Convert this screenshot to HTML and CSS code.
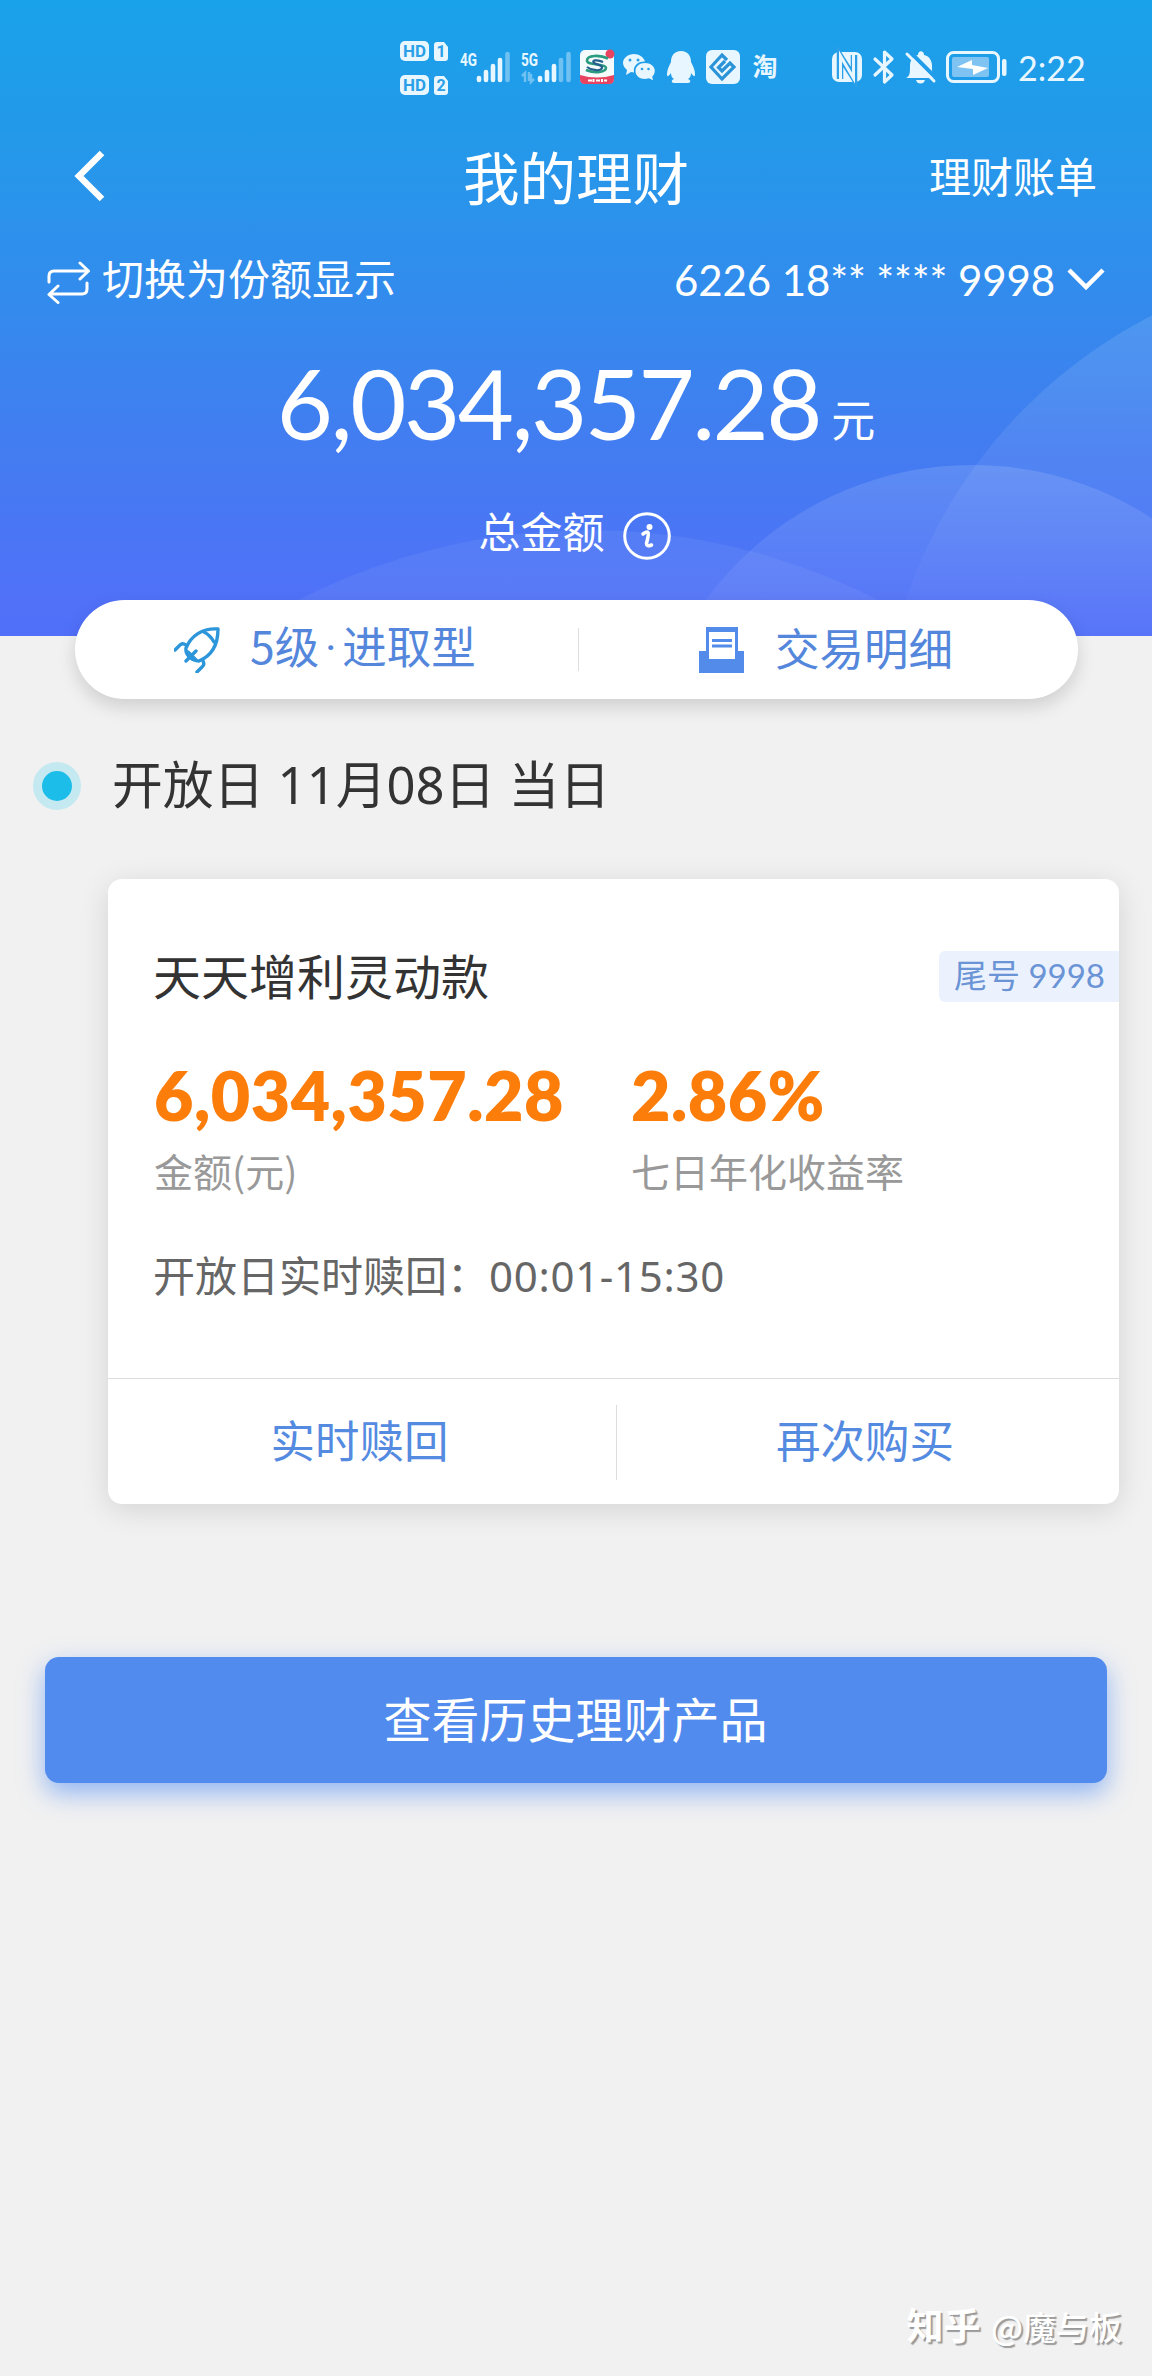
FILE: index.html
```html
<!DOCTYPE html>
<html lang="zh-CN">
<head>
    <meta charset="UTF-8">
    <meta name="viewport" content="width=device-width, initial-scale=1.0">
    <title>我的理财</title>
    <link rel="stylesheet" href="styles.css">
</head>
<body>
    <header class="header">
        <svg class="header-bg" viewBox="0 0 1152 636" width="1152" height="636">
            <defs>
                <linearGradient id="fade" gradientUnits="userSpaceOnUse" x1="0" y1="316" x2="0" y2="636">
                    <stop offset="0" stop-color="#fff" stop-opacity="0.12"/>
                    <stop offset="1" stop-color="#fff" stop-opacity="0.01"/>
                </linearGradient>
                <linearGradient id="fade2" gradientUnits="userSpaceOnUse" x1="0" y1="465" x2="0" y2="636">
                    <stop offset="0" stop-color="#fff" stop-opacity="0.13"/>
                    <stop offset="1" stop-color="#fff" stop-opacity="0.03"/>
                </linearGradient>
            </defs>
            <circle cx="1379" cy="761" r="500" fill="url(#fade)"/>
            <circle cx="972" cy="795" r="330" fill="url(#fade2)"/>
            <circle cx="588" cy="1166" r="636" fill="#fff" fill-opacity="0.06"/>
        </svg>

        <div class="status-bar">
            <svg class="status-icons" viewBox="400 36 620 64" width="620" height="64">
                <g fill="#e8f7ff">
                    <rect x="400" y="41" width="29" height="20" rx="5"/>
                    <rect x="400" y="75" width="29" height="20" rx="5"/>
                    <path d="M437 42h7l4 5v11q0 3-3 3h-8q-3 0-3-3V45q0-3 3-3z"/>
                    <path d="M437 76h7l4 5v11q0 3-3 3h-8q-3 0-3-3V79q0-3 3-3z"/>
                </g>
                <g class="sim-text" fill="#2b9fe8" font-size="16">
                    <text x="403" y="57" textLength="23" lengthAdjust="spacingAndGlyphs">HD</text>
                    <text x="403" y="91" textLength="23" lengthAdjust="spacingAndGlyphs">HD</text>
                    <text x="436.500" y="57">1</text>
                    <text x="436.500" y="91">2</text>
                </g>
                <g class="sim-text" fill="#e8f7ff" font-size="19">
                    <text x="460" y="65.500" textLength="17" lengthAdjust="spacingAndGlyphs">4G</text>
                    <text x="521" y="65.500" textLength="17" lengthAdjust="spacingAndGlyphs">5G</text>
                </g>
                <g stroke="#e8f7ff" stroke-width="4.600" stroke-linecap="round">
                    <path d="M479 78v2M486 72v8M493 66v14M500 60v20"/>
                    <path d="M507.500 54v26" opacity=".4"/>
                    <path d="M540 78v2M547 72v8M554 66v14"/>
                    <path d="M561 60v20M568.500 54v26" opacity=".4"/>
                </g>
                <path d="M522 76l3-3v9M529 72v9M531 74v8l3-3" fill="none" stroke="#e8f7ff" stroke-width="2.500" opacity=".4"/>

                <!-- bank app -->
                <rect x="580" y="50" width="34" height="34" rx="5" fill="#f4fbfa"/>
                <path d="M580 75q17 5 34 0v4q0 5-5 5h-24q-5 0-5-5z" fill="#e8435f"/>
                <circle cx="610" cy="54" r="4.500" fill="#e8435f"/>
                <path d="M588 80.500h4M593.500 79v3M596 80.500h4M602 79v3M604 80.500h3" stroke="#fff" stroke-width="2"/>
                <path d="M608 58.500c-8-4-21-3.500-21 2s18 2.500 19 7c0 5-11 6-20 2.500" fill="none" stroke="#2a9b7e" stroke-width="2.600"/>
                <path d="M603 62c-6-3-12-1.500-9 .8s9 2 8 5.200-10 3-15-1" fill="none" stroke="#23608c" stroke-width="2.200"/>

                <!-- chat bubbles -->
                <g fill="#e8f7ff">
                    <path d="M634 54c-6 0-11 4-11 9 0 3 2 5 4 7l-1 5 5-3 3 .5a10 9 0 0 1 11-11c-1-4-6-7.500-11-7.500z"/>
                    <path d="M645 63c-5.500 0-9.500 3.500-9.500 8s4 8 9.500 8l4-.8 4 2-.8-3.600c1.500-1.500 2.600-3.500 2.600-5.600 0-4.500-4.300-8-9.800-8z"/>
                </g>
                <g fill="#2b9fe8">
                    <circle cx="630" cy="60" r="1.500"/><circle cx="638" cy="60" r="1.500"/>
                    <circle cx="642" cy="69" r="1.300"/><circle cx="648.500" cy="69" r="1.300"/>
                </g>

                <!-- penguin -->
                <path d="M681 51c-7 0-10 5-10 11-2 4-4 8-4 12 0 3 1 3 4-1 0 3 1 5 3 6-3 1-3 4 0 4h14c3 0 3-3 0-4 2-1 3-3 3-6 3 4 4 4 4 1 0-4-2-8-4-12 0-6-3-11-10-11z" fill="#e8f7ff"/>

                <rect x="706" y="50" width="34" height="34" rx="6" fill="#e8f7ff"/>
                <path d="M727 60l-5-5-11 12 11 12 12-12-4-4-8 8-3.500-3.500 6.500-6.500" fill="none" stroke="#2b93d8" stroke-width="3.200"/>
                <text class="tao" x="752.500" y="76" font-size="25" fill="#e8f7ff">淘</text>

                <!-- nfc -->
                <rect x="832" y="52" width="30" height="30" rx="7" fill="#e8f7ff"/>
                <path d="M840 79V56l14 22V55" fill="none" stroke="#2b9fe8" stroke-width="6.500"/>
                <path d="M840.500 82V56l13 22V52" fill="none" stroke="#e8f7ff" stroke-width="3"/>

                <path d="M875 59l17 16-7.500 7V52l7.500 7-17 16" fill="none" stroke="#e8f7ff" stroke-width="3.200" stroke-linejoin="round" stroke-linecap="round"/>

                <!-- muted bell -->
                <path d="M906 78c4-2 4-5 4-12 0-6 3-10 8-11 0-5 6-5 6 0 5 1 8 5 8 11 0 7 0 10 4 12zM916 80h9q-1 3.500-4.500 3.500T916 80z" fill="#e8f7ff"/>
                <path d="M909 51l29 29" stroke="#229de9" stroke-width="4"/>
                <path d="M907 54l27 27" stroke="#e8f7ff" stroke-width="3" stroke-linecap="round"/>

                <rect x="947.500" y="52.500" width="51" height="29" rx="6" fill="none" stroke="#e8f7ff" stroke-width="3"/>
                <rect x="952" y="57" width="37" height="20" rx="2" fill="#7fc3f3"/>
                <rect x="1002" y="59" width="4.500" height="17" rx="2" fill="#e8f7ff"/>
                <path d="M957 67l15-7v5l16 3-15 7v-6z" fill="#fff"/>
            </svg>
            <span class="clock">2:22</span>
        </div>

        <nav class="nav">
            <svg class="nav-back" viewBox="0 0 32 52" width="32" height="52"><path d="M28 3L5 26l23 23" fill="none" stroke="#fff" stroke-width="6.500"/></svg>
            <h1>我的理财</h1>
            <a class="nav-bill">理财账单</a>
        </nav>

        <div class="account">
            <div class="account-switch">
                <svg viewBox="0 0 44 44" width="44" height="44" fill="none" stroke="#fff" stroke-width="3" stroke-linecap="round" stroke-linejoin="round">
                    <path d="M2 22v-6q0-5 5-5h34M33 3l8.500 8L33 19M40 23v6q0 5-5 5H3M11 26l-9 8.500 9 8"/>
                </svg>
                <span>切换为份额显示</span>
            </div>
            <div class="account-card">
                <span>6226 18** **** 9998</span>
                <svg viewBox="0 0 40 26" width="40" height="26"><path d="M3 3l17 17L37 3" fill="none" stroke="#fff" stroke-width="4.500"/></svg>
            </div>
        </div>

        <div class="total"><span class="total-num">6,034,357.28</span><span class="total-unit">元</span></div>
        <div class="total-label">
            <span>总金额</span>
            <svg viewBox="0 0 48 48" width="48" height="48">
                <circle cx="24" cy="24" r="22.300" fill="none" stroke="#fff" stroke-width="3"/>
                <circle cx="26.500" cy="15" r="3" fill="#fff"/>
                <path d="M20 22q4-3 5-1.500t-1.500 11q0 3.500 5 1.500" fill="none" stroke="#fff" stroke-width="3.600" stroke-linecap="round"/>
            </svg>
        </div>
    </header>

    <section class="quick">
        <a class="quick-item">
            <svg class="quick-rocket" viewBox="0 0 46 46" width="46" height="46" fill="none" stroke="#2d96da" stroke-width="3.400" stroke-linecap="round" stroke-linejoin="round">
                <path d="M12 21C17 9 28 1 44 2c0 16-7 27-19 32-7 0-14-6-13-13z"/>
                <path d="M30 5q6 3 10 10M12 18q-4-3-7 1l-4 4M29 34q2 4-1 6l-5 5M22 24L12 34M14 25l8 8"/>
            </svg>
            <span class="quick-level">5级<i class="dot">·</i>进取型</span>
        </a>
        <a class="quick-item quick-detail">
            <svg viewBox="0 0 46 46" width="46" height="46">
                <path d="M7 0h32v24h6v22H0V24h7z" fill="#528be9"/>
                <path d="M10 5h26v27H10z" fill="#fff"/>
                <path d="M13 13.500h20M13 19h20" stroke="#528be9" stroke-width="3"/>
            </svg>
            <span>交易明细</span>
        </a>
    </section>

    <main>
        <h2 class="day"><i class="day-dot"></i><span>开放日 11月08日 当日</span></h2>

        <article class="card">
            <div class="card-head">
                <h3>天天增利灵动款</h3>
                <span class="card-tag">尾号 9998</span>
            </div>
            <div class="figures">
                <div class="figure">
                    <strong>6,034,357.28</strong>
                    <span>金额(元)</span>
                </div>
                <div class="figure">
                    <strong>2.86%</strong>
                    <span>七日年化收益率</span>
                </div>
            </div>
            <p class="redeem-time">开放日实时赎回：<span>00:01-15:30</span></p>
            <div class="card-actions">
                <a>实时赎回</a>
                <a>再次购买</a>
            </div>
        </article>

        <button class="history" type="button">查看历史理财产品</button>
    </main>

    <footer class="watermark"><b>知乎</b> @魔与板</footer>
</body>
</html>
```
FILE: styles.css
```css
* {
    box-sizing: border-box;
}

body {
    margin: 0;
    width: 1152px;
    height: 2376px;
    display: flex;
    flex-direction: column;
    background-color: #f1f1f1;
    font-family: "Noto Sans CJK SC", sans-serif;
    color: #333;
}

h1, h2, h3, p {
    margin: 0;
    font-weight: 400;
}

i {
    font-style: normal;
}

svg {
    display: block;
    flex: none;
}

/* header */
.header {
    position: relative;
    height: 636px;
    color: #fff;
    background: linear-gradient(#19a2e9 0, #2598ea 150px, #338bed 300px, #437cf1 450px, #5071f8 600px, #516ff9 100%);
}

.header-bg {
    position: absolute;
    left: 0;
    top: 0;
}

.header > div,
.header > nav {
    position: relative;
}

.status-bar {
    height: 136px;
    padding: 36px 0 0 400px;
    display: flex;
}

.sim-text {
    font-family: Roboto, sans-serif;
    font-weight: 700;
}

.tao {
    font-weight: 700;
}

.clock {
    margin-left: -2px;
    font-family: Lato, sans-serif;
    font-size: 34px;
    line-height: 64px;
    color: #e8f7ff;
}

.nav {
    height: 84px;
    padding: 0 55px 0 74px;
    display: grid;
    grid-template-columns: 1fr auto 1fr;
    align-items: center;
}

.nav-back {
    margin-top: -5px;
}

.nav h1 {
    margin: -6px 19px 0 0;
    font-size: 56.500px;
    line-height: 84px;
}

.nav-bill {
    justify-self: end;
    margin-top: -6px;
    font-size: 42px;
    line-height: 84px;
}

.account {
    height: 120px;
    padding: 0 46px 0 47px;
    display: flex;
    justify-content: space-between;
    align-items: center;
    font-size: 42px;
    line-height: 60px;
}

.account-switch,
.account-card {
    display: flex;
    align-items: center;
    gap: 11px;
}

.account-switch svg {
    margin-top: 4px;
}

.account-switch span {
    margin-top: -6px;
}

.account-card {
    font-family: Lato, "Noto Sans CJK SC", sans-serif;
    letter-spacing: -0.100px;
}

.total {
    height: 130px;
    margin-top: -2px;
    display: flex;
    justify-content: center;
    align-items: baseline;
    line-height: 130px;
}

.total-num {
    font-family: Lato, sans-serif;
    font-size: 97px;
    letter-spacing: -2.500px;
}

.total-unit {
    margin: -6px 0 0 11px;
    font-size: 44px;
    line-height: 60px;
    align-self: center;
    padding-top: 35px;
}

.total-label {
    margin: 40px 3px 0 0;
    display: flex;
    justify-content: center;
    align-items: center;
    gap: 18px;
    font-size: 42px;
    line-height: 60px;
}

.total-label span {
    margin-top: -8px;
}

.total-label svg {
    margin-top: 4px;
}

/* floating pill */
.quick {
    position: relative;
    width: 1003px;
    height: 99px;
    margin: -36px 0 0 75px;
    display: flex;
    align-items: center;
    border-radius: 50px;
    background-color: #fff;
    box-shadow: 0 8px 18px rgba(0, 0, 0, 0.14);
    color: #5487dc;
    font-size: 44.500px;
    line-height: 64px;
}

.quick-item {
    width: 503px;
    height: 43px;
    padding-left: 99px;
    display: flex;
    align-items: center;
    gap: 30px;
}

.quick-item span {
    margin-top: -5px;
}

.quick-detail {
    width: 500px;
    padding-left: 120px;
    border-left: 1px solid #ddd;
}

.quick-level {
    display: flex;
}

.dot {
    width: 23px;
    padding-top: 4px;
    font-family: Roboto, sans-serif;
    text-align: center;
}

/* product list */
.day {
    height: 72px;
    margin-top: 51px;
    padding-left: 33px;
    display: flex;
    align-items: center;
    gap: 31px;
    font-family: "Noto Sans", "Noto Sans CJK SC", sans-serif;
    font-size: 50.800px;
    line-height: 72px;
}

.day span {
    height: 75px;
}

.day-dot {
    width: 48px;
    height: 48px;
    border: 9px solid #c5e9f1;
    border-radius: 50%;
    background-color: #1cbde8;
}

.card {
    width: 1011px;
    height: 625px;
    margin: 57px 0 0 108px;
    display: flex;
    flex-direction: column;
    border-radius: 14px;
    background-color: #fff;
    box-shadow: 0 6px 30px rgba(0, 0, 0, 0.12);
}

.card-head {
    margin-top: 59px;
    padding-left: 45px;
    display: flex;
    justify-content: space-between;
    align-items: flex-start;
}

.card-head h3 {
    font-size: 48px;
    line-height: 72px;
}

.card-tag {
    width: 180px;
    height: 51px;
    margin-top: 13px;
    padding-left: 15px;
    border-radius: 6px 0 0 6px;
    background-color: #ebf2fd;
    color: #6b94d6;
    font-family: Lato, "Noto Sans CJK SC", sans-serif;
    font-size: 33px;
    line-height: 49px;
}

.figures {
    margin-top: 44px;
    padding-left: 46px;
    display: grid;
    grid-template-columns: 477px 1fr;
}

.figure strong {
    display: block;
    font-family: Lato, sans-serif;
    font-weight: 800;
    font-size: 68px;
    line-height: 82px;
    letter-spacing: 0.500px;
    color: #fc7d0a;
}

.figure span {
    display: block;
    font-size: 39px;
    line-height: 68px;
    color: #999;
}

.redeem-time {
    margin-top: 38px;
    padding-left: 45px;
    font-size: 42px;
    line-height: 64px;
    color: #666;
}

.redeem-time span {
    font-family: "Noto Sans", sans-serif;
    letter-spacing: 0.700px;
}

.card-actions {
    height: 126px;
    margin-top: auto;
    padding-top: 26px;
    display: flex;
    border-top: 1px solid #ddd;
}

.card-actions a {
    flex: 1;
    height: 75px;
    color: #548ae0;
    font-size: 44.500px;
    line-height: 68px;
    text-align: center;
}

.card-actions a:first-child {
    flex: 0 0 508px;
    padding-right: 5px;
}

.card-actions a + a {
    padding-right: 6px;
    border-left: 1px solid #ddd;
}

.history {
    display: block;
    width: 1062px;
    height: 126px;
    margin: 153px 0 0 45px;
    padding: 0 1px 6px 0;
    border: none;
    border-radius: 14px;
    background-color: #518bed;
    box-shadow: 0 10px 26px rgba(80, 140, 245, 0.6);
    color: #fff;
    font-family: inherit;
    font-size: 48px;
}

.watermark {
    margin-top: auto;
    padding: 0 30px 25px 0;
    color: #fff;
    font-size: 33px;
    font-weight: 500;
    line-height: 50px;
    text-align: right;
    text-shadow: 2px 2px 1px #999;
}

.watermark b {
    margin-right: 3px;
    font-size: 37px;
    font-weight: 700;
}
```
